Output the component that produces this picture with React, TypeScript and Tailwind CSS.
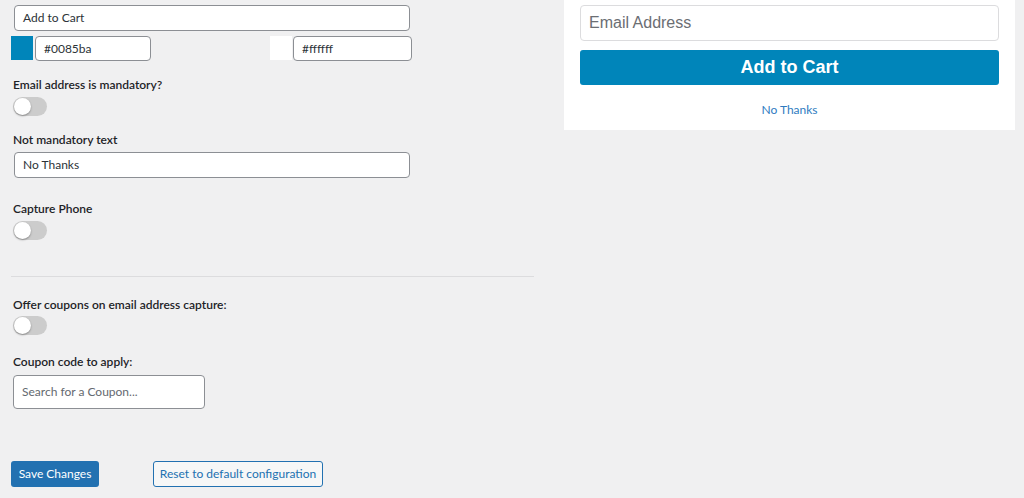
import React from 'react';

const font = { fontFamily: 'Lato, "Open Sans", sans-serif' };

const Toggle: React.FC = () => (
  <div className="w-[34px] h-[19px] rounded-full bg-[#cccccc] flex items-center pl-[1px]">
    <div className="w-[17px] h-[17px] rounded-full bg-white shadow-[0_1px_2px_rgba(0,0,0,0.35)]" />
  </div>
);

const Label: React.FC<{ children: React.ReactNode; className?: string }> = ({ children, className }) => (
  <div className={`text-[12px] font-semibold leading-[16px] text-[#1d2327] ${className || ''}`}>{children}</div>
);

const TextBox: React.FC<{ value?: string; placeholder?: string; className?: string }> = ({ value, placeholder, className }) => (
  <div className={`flex items-center bg-white border border-[#8c8f94] rounded-[4px] px-[8px] text-[12px] ${className || ''}`}>
    {value ? <span className="text-[#2c3338]">{value}</span> : <span className="text-[#646970]">{placeholder}</span>}
  </div>
);

export default function App() {
  return (
    <div className="w-[1024px] h-[498px] bg-[#f0f0f1] flex overflow-hidden" style={font}>
      {/* settings column */}
      <div className="w-[564px] pl-[11px] flex flex-col">
        <TextBox value="Add to Cart" className="mt-[5px] ml-[3px] w-[396px] h-[26px]" />
        <div className="mt-[5px] flex h-[25px]">
          <div className="w-[22px] h-[24px] bg-[#0085ba]" />
          <TextBox value="#0085ba" className="ml-[2px] w-[116px] h-[25px]" />
          <div className="ml-[119px] w-[22px] h-[24px] bg-white" />
          <TextBox value="#ffffff" className="ml-[1px] w-[119px] h-[25px]" />
        </div>

        <Label className="mt-[16px] ml-[2px]">Email address is mandatory?</Label>
        <div className="mt-[4px] ml-[2px]"><Toggle /></div>

        <Label className="mt-[16px] ml-[2px]">Not mandatory text</Label>
        <TextBox value="No Thanks" className="mt-[4px] ml-[3px] w-[396px] h-[26px]" />

        <Label className="mt-[23px] ml-[2px]">Capture Phone</Label>
        <div className="mt-[4px] ml-[2px]"><Toggle /></div>

        <div className="mt-[36px] w-[523px] h-[1px] bg-[#dcdcde]" />

        <Label className="mt-[20px] ml-[2px]">Offer coupons on email address capture:</Label>
        <div className="mt-[3px] ml-[2px]"><Toggle /></div>

        <Label className="mt-[19px] ml-[2px]">Coupon code to apply:</Label>
        <TextBox placeholder="Search for a Coupon..." className="mt-[5px] ml-[2px] w-[192px] h-[34px]" />

        <div className="mt-[52px] flex items-center">
          <button className="w-[88px] h-[26px] rounded-[3px] bg-[#2271b1] text-white text-[12px] whitespace-nowrap">Save Changes</button>
          <button className="ml-[54px] w-[170px] h-[26px] rounded-[3px] bg-[#f6f7f7] border border-[#2271b1] text-[#2271b1] text-[12px] whitespace-nowrap">
            Reset to default configuration
          </button>
        </div>
      </div>

      {/* preview column */}
      <div className="w-[451px]">
        <div className="bg-white h-[130px] px-[16px] pt-[5px] flex flex-col">
          <div className="h-[36px] border border-[#dcdcde] rounded-[4px] flex items-center px-[8px] text-[16px] text-[#6b6e73]" style={{ fontFamily: '"Liberation Sans", Arial, sans-serif' }}>
            Email Address
          </div>
          <div className="mt-[9px] h-[35px] rounded-[3px] bg-[#0085ba] flex items-center justify-center text-white text-[18px] font-bold" style={{ fontFamily: '"Liberation Sans", Arial, sans-serif' }}>
            Add to Cart
          </div>
          <div className="mt-[16px] text-center text-[12px] text-[#2e7bbf]">No Thanks</div>
        </div>
      </div>
    </div>
  );
}
